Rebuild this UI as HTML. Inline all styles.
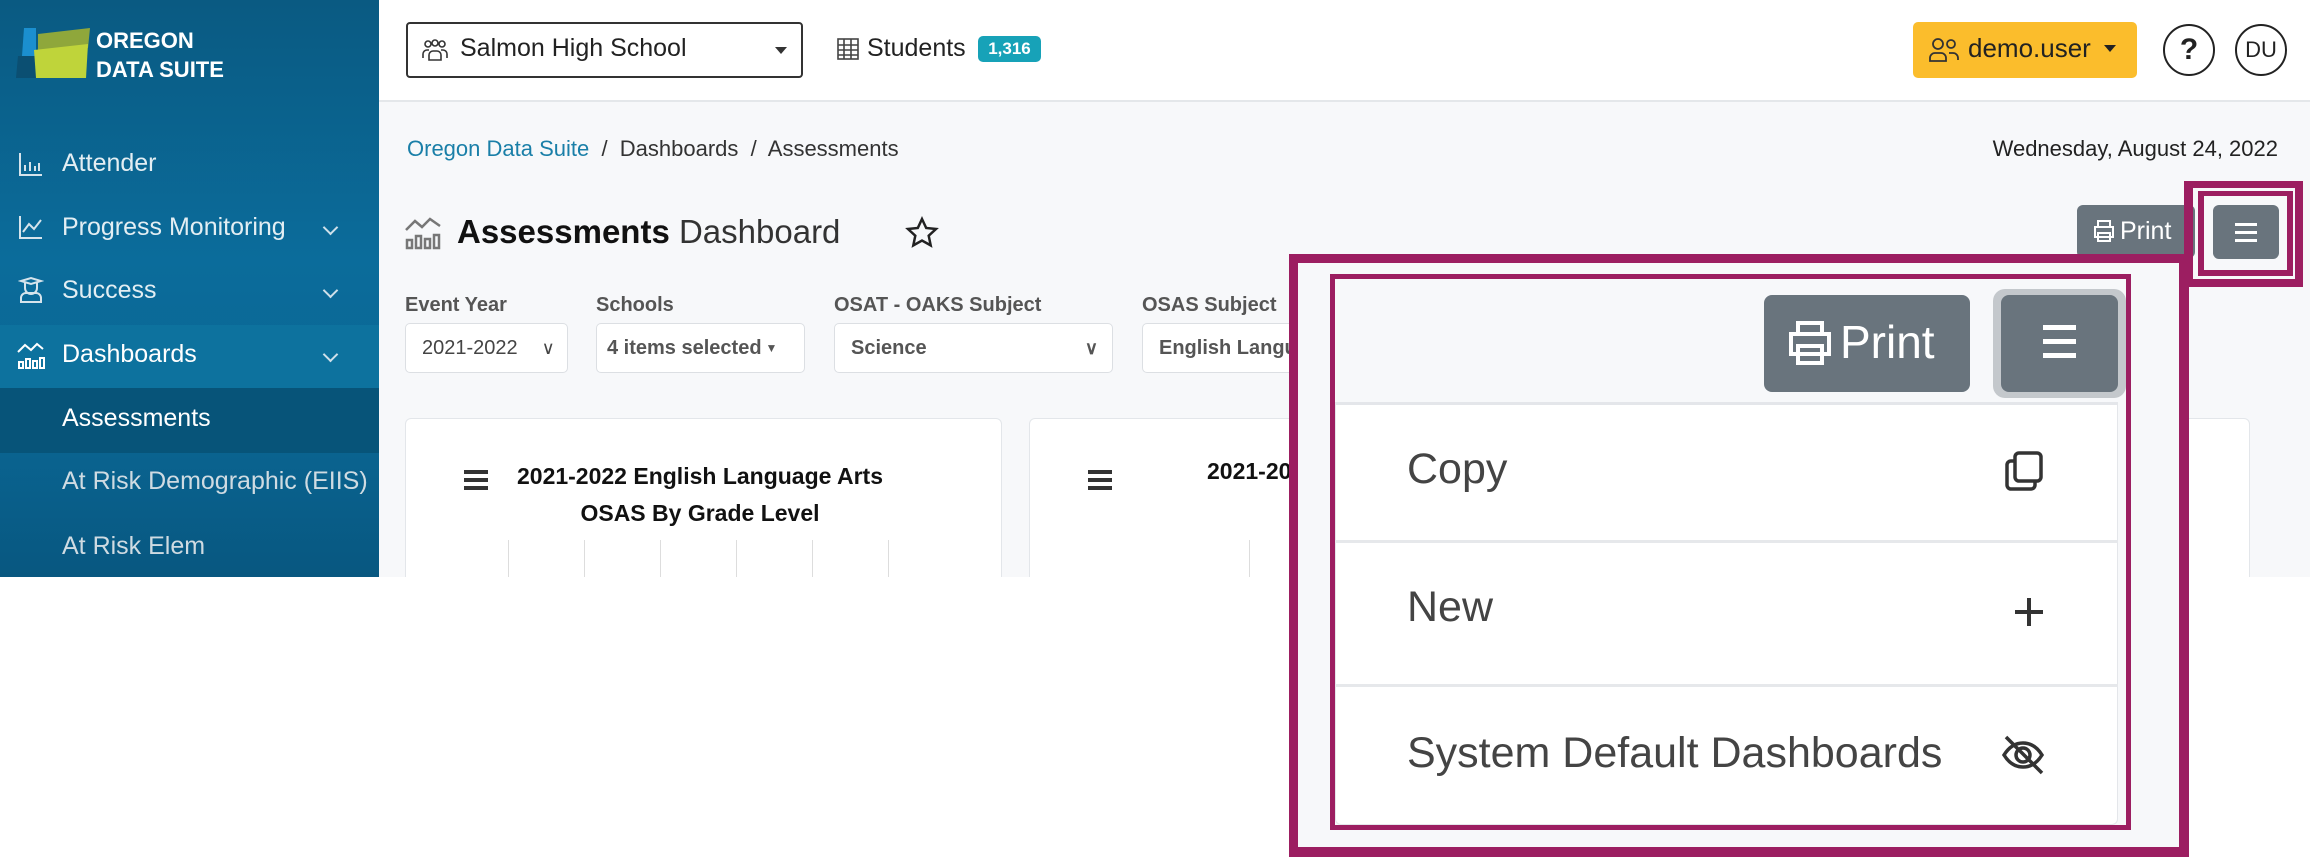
<!DOCTYPE html>
<html><head><meta charset="utf-8"><style>
*{box-sizing:border-box;margin:0;padding:0}
body{width:2310px;height:857px;background:#fff;font-family:"Liberation Sans",sans-serif;position:relative;overflow:hidden}
.a{position:absolute}
.side{left:0;top:0;width:379px;height:577px;background:linear-gradient(#0a5a82,#0b6c9b 45%,#0a6592 75%,#085780)}
.nav{left:62px;font-size:25px;color:#e3eef3;white-space:nowrap}
.chev{left:325px;width:11px;height:11px;border-right:2px solid #cfe0ea;border-bottom:2px solid #cfe0ea;transform:rotate(45deg)}
.main{left:379px;top:0;width:1931px;height:577px;background:#f7f8fa}
.hdr{left:379px;top:0;width:1931px;height:102px;background:#fff;border-bottom:2px solid #e4e7ea}
.sel{background:#fff;border:1px solid #dcdfe3;border-radius:5px;font-size:20px;color:#444;padding:0 0 0 16px;display:flex;align-items:center}
.lbl{font-size:20px;color:#555;font-weight:bold;top:294px}
.card{background:#fff;border:1px solid #e3e6ea;border-radius:6px;top:418px;height:170px}
.ham{width:24px;height:4px;background:#333;box-shadow:0 8px 0 #333,0 16px 0 #333}
.mg{border-style:solid;border-color:#9c1e61}
.btn{background:#69747d;border-radius:6px}
.mi{left:1407px;font-size:43px;color:#444;white-space:nowrap}
</style></head><body>
<div class="a side"></div>
<svg class="a" style="left:16px;top:26px" width="80" height="54"><polygon points="8,2 20,2 20,30 6,30" fill="#1b8fcf"/><polygon points="2,30 22,30 22,52 0,52" fill="#0b4f72"/><polygon points="22,8 74,2 72,22 22,26" fill="#8fa73b"/><polygon points="18,24 72,18 70,52 20,52" fill="#bfd43a"/></svg>
<div class="a" style="left:96px;top:26px;color:#fff;font-weight:bold;font-size:22px;line-height:29px">OREGON<br>DATA SUITE</div>
<div class="a" style="left:0;top:325px;width:379px;height:63px;background:#0d729e"></div>
<div class="a" style="left:0;top:388px;width:379px;height:65px;background:#075479"></div>
<div class="a nav" style="top:149px">Attender</div>
<div class="a nav" style="top:213px">Progress Monitoring</div>
<div class="a nav" style="top:276px">Success</div>
<div class="a nav" style="top:340px;color:#fff">Dashboards</div>
<div class="a nav" style="top:404px;color:#fff">Assessments</div>
<div class="a nav" style="top:467px;color:#cfdbe2">At Risk Demographic (EIIS)</div>
<div class="a nav" style="top:532px;color:#cfdbe2">At Risk Elem</div>
<div class="a chev" style="top:222px"></div><div class="a chev" style="top:285px"></div><div class="a chev" style="top:349px"></div>
<svg class="a" style="left:18px;top:151px" width="26" height="26" fill="none" stroke="#d6e4ec" stroke-width="2"><path d="M2 2v22h22M7 20v-6M12 20v-9M17 20v-5M21 20v-8"/></svg>
<svg class="a" style="left:18px;top:214px" width="26" height="26" fill="none" stroke="#d6e4ec" stroke-width="2"><path d="M2 2v22h22M5 18l6-8 5 5 7-9"/></svg>
<svg class="a" style="left:18px;top:276px" width="26" height="28" fill="none" stroke="#d6e4ec" stroke-width="2"><path d="M3 5l10-3 10 3-10 3zM7 7v5a6 6 0 0012 0V7M3 26v-4a5 5 0 015-5h10a5 5 0 015 5v4z"/></svg>
<svg class="a" style="left:16px;top:340px" width="30" height="30" fill="none" stroke="#fff" stroke-width="2"><path d="M2 12l7-7 6 5 6-6 6 5M3 28v-6h4v6zM10 28v-9h4v9zM17 28v-7h4v7zM24 28v-10h4v10z"/></svg>

<div class="a main"></div>
<div class="a hdr"></div>
<div class="a" style="left:406px;top:22px;width:397px;height:56px;border:2px solid #333;border-radius:4px;background:#fff"></div>
<svg class="a" style="left:420px;top:38px" width="30" height="24" fill="none" stroke="#333" stroke-width="1.6"><circle cx="8" cy="6" r="3"/><circle cx="15" cy="5" r="3"/><circle cx="22" cy="6" r="3"/><path d="M3 20v-4a4 4 0 014-4h2M27 20v-4a4 4 0 00-4-4h-2M9 22v-5a4 4 0 014-4h4a4 4 0 014 4v5z"/></svg>
<div class="a" style="left:460px;top:34px;font-size:25px;color:#222">Salmon High School</div>
<div class="a" style="left:775px;top:47px;border:6px solid transparent;border-top:7px solid #333"></div>
<svg class="a" style="left:837px;top:38px" width="22" height="22" fill="none" stroke="#444" stroke-width="1.6"><rect x="1" y="1" width="20" height="20"/><path d="M1 7h20M1 12h20M1 17h20M7 1v20M14 1v20"/></svg>
<div class="a" style="left:867px;top:34px;font-size:25px;color:#222">Students</div>
<div class="a" style="left:978px;top:36px;width:63px;height:26px;background:#17a2b8;border-radius:5px;color:#fff;font-weight:bold;font-size:17px;text-align:center;line-height:26px">1,316</div>
<div class="a" style="left:1913px;top:22px;width:224px;height:56px;background:#fbbd2c;border-radius:5px"></div>
<svg class="a" style="left:1928px;top:37px" width="32" height="26" fill="none" stroke="#333" stroke-width="1.8"><circle cx="10" cy="7" r="5"/><circle cx="23" cy="7" r="4"/><path d="M2 24v-3a5 5 0 015-5h6a5 5 0 015 5v3zM21 16h4a5 5 0 015 5v2"/></svg>
<div class="a" style="left:1968px;top:33px;font-size:26px;color:#222">demo.user</div>
<div class="a" style="left:2104px;top:45px;border:6px solid transparent;border-top:7px solid #222"></div>
<div class="a" style="left:2163px;top:24px;width:52px;height:52px;border:2px solid #222;border-radius:50%;text-align:center;line-height:48px;font-size:30px;font-weight:bold;color:#222">?</div>
<div class="a" style="left:2235px;top:24px;width:52px;height:52px;border:2px solid #222;border-radius:50%;text-align:center;line-height:48px;font-size:22px;color:#222">DU</div>

<div class="a" style="left:407px;top:136px;font-size:22px;color:#333;white-space:nowrap"><span style="color:#1a7fa8">Oregon Data Suite</span> &nbsp;/&nbsp; Dashboards &nbsp;/&nbsp; Assessments</div>
<div class="a" style="left:1960px;top:136px;width:318px;text-align:right;font-size:22px;color:#222">Wednesday, August 24, 2022</div>
<svg class="a" style="left:403px;top:214px" width="42" height="36" fill="none" stroke="#777" stroke-width="2.5"><path d="M3 16l9-9 7 6 8-8 10 7M4 34v-8h5v8zM13 34v-12h5v12zM22 34v-9h5v9zM31 34v-13h5v13z"/></svg>
<div class="a" style="left:457px;top:213px;font-size:33px;color:#111;white-space:nowrap"><b>Assessments</b> <span style="color:#333">Dashboard</span></div>
<svg class="a" style="left:905px;top:216px" width="34" height="34" fill="none" stroke="#222" stroke-width="2.5"><path d="M17 3l4.2 9 9.8 1-7.3 6.7 2 9.7L17 24.5 8.3 29.4l2-9.7L3 13l9.8-1z"/></svg>
<div class="a btn" style="left:2077px;top:205px;width:118px;height:53px"></div>
<div class="a" style="left:2120px;top:217px;font-size:25px;color:#fff">Print</div>
<svg class="a" style="left:2092px;top:219px" width="24" height="24" fill="none" stroke="#fff" stroke-width="2"><path d="M6 8V2h12v6M3 8h18v10H3zM6 14h12v8H6z"/></svg>
<div class="a btn" style="left:2213px;top:205px;width:66px;height:54px"></div>
<div class="a" style="left:2235px;top:223px;width:22px;height:3px;background:#fff;box-shadow:0 8px 0 #fff,0 16px 0 #fff"></div>

<div class="a lbl" style="left:405px">Event Year</div>
<div class="a lbl" style="left:596px">Schools</div>
<div class="a lbl" style="left:834px">OSAT - OAKS Subject</div>
<div class="a lbl" style="left:1142px">OSAS Subject</div>
<div class="a sel" style="left:405px;top:323px;width:163px;height:50px">2021-2022<span style="margin-left:24px;font-size:18px">&#8744;</span></div>
<div class="a sel" style="left:596px;top:323px;width:209px;height:50px;padding-left:10px;font-weight:bold;color:#555">4 items selected<span style="font-size:12px;margin-left:4px">&#9660;</span></div>
<div class="a sel" style="left:834px;top:323px;width:279px;height:50px;font-weight:bold;color:#555">Science<span style="position:absolute;right:14px;font-size:18px">&#8744;</span></div>
<div class="a sel" style="left:1142px;top:323px;width:200px;height:50px;font-weight:bold;color:#555;overflow:hidden;white-space:nowrap">English Language</div>

<div class="a card" style="left:405px;width:597px"></div>
<div class="a card" style="left:1029px;width:1221px"></div>
<div class="a ham" style="left:464px;top:470px"></div>
<div class="a ham" style="left:1088px;top:470px"></div>
<div class="a" style="left:505px;top:458px;width:390px;text-align:center;font-size:23px;font-weight:bold;color:#111;line-height:37px">2021-2022 English Language Arts<br>OSAS By Grade Level</div>
<div class="a" style="left:1207px;top:458px;font-size:23px;font-weight:bold;color:#111">2021-2022</div>
<div class="a" style="left:2140px;top:458px;font-size:23px;font-weight:bold;color:#111">Arts</div>
<div class="a" style="left:508px;top:540px;width:381px;height:37px;background:repeating-linear-gradient(90deg,#ddd 0 1px,transparent 1px 76px)"></div>
<div class="a" style="left:1249px;top:540px;width:1px;height:37px;background:#ddd"></div>
<div class="a" style="left:2142px;top:563px;width:12px;height:14px;background:#f08040"></div>
<div class="a" style="left:0;top:577px;width:2310px;height:280px;background:#fff"></div>

<div class="a" style="left:1298px;top:263px;width:881px;height:584px;background:#f7f8fa"></div>
<div class="a" style="left:1335px;top:279px;width:790px;height:546px;background:#f7f8fa"></div>
<div class="a" style="left:1335px;top:402px;width:783px;height:423px;background:#fff;border:1px solid #e4e6ea;border-top:3px solid #e4e6ea;border-radius:0 0 6px 6px"></div>
<div class="a" style="left:1335px;top:540px;width:783px;height:3px;background:#e6e8eb"></div>
<div class="a" style="left:1335px;top:684px;width:783px;height:3px;background:#e6e8eb"></div>
<div class="a btn" style="left:1764px;top:295px;width:206px;height:97px;border-radius:8px"></div>
<svg class="a" style="left:1788px;top:320px" width="44" height="46" fill="none" stroke="#fff" stroke-width="4"><path d="M10 14V3h24v11M3 14h38v20H3zM10 26h24v17H10z"/></svg>
<div class="a" style="left:1840px;top:315px;font-size:46px;color:#fff">Print</div>
<div class="a" style="left:1993px;top:289px;width:133px;height:109px;background:#c4c8cc;border-radius:12px"></div>
<div class="a btn" style="left:2001px;top:295px;width:117px;height:97px;border-radius:8px"></div>
<div class="a" style="left:2043px;top:325px;width:33px;height:5px;background:#fff;box-shadow:0 14px 0 #fff,0 28px 0 #fff"></div>
<div class="a mi" style="top:445px">Copy</div>
<div class="a mi" style="top:583px">New</div>
<div class="a mi" style="top:729px">System Default Dashboards</div>
<svg class="a" style="left:2004px;top:450px" width="40" height="42" fill="none" stroke="#333" stroke-width="3.5"><rect x="11" y="3" width="26" height="28" rx="4"/><path d="M11 11H7a4 4 0 00-4 4v20a4 4 0 004 4h20a4 4 0 004-4v-4"/></svg>
<svg class="a" style="left:2014px;top:597px" width="30" height="30" stroke="#333" stroke-width="4"><path d="M15 1v28M1 15h28"/></svg>
<svg class="a" style="left:2000px;top:734px" width="46" height="42" fill="none" stroke="#333" stroke-width="3.5"><path d="M4 21c5-8 11-12 19-12s14 4 19 12c-5 8-11 12-19 12S9 29 4 21z"/><circle cx="23" cy="21" r="7"/><path d="M6 3l36 36"/></svg>
<div class="a mg" style="left:1289px;top:254px;width:900px;height:603px;border-width:9px 10px 10px 9px"></div>
<div class="a mg" style="left:1330px;top:274px;width:801px;height:556px;border-width:5px"></div>
<div class="a mg" style="left:2184px;top:181px;width:119px;height:106px;border-width:7px 8px 8px 9px"></div>
<div class="a mg" style="left:2198px;top:191px;width:95px;height:85px;border-width:5px 6px 6px 6px"></div>
</body></html>
